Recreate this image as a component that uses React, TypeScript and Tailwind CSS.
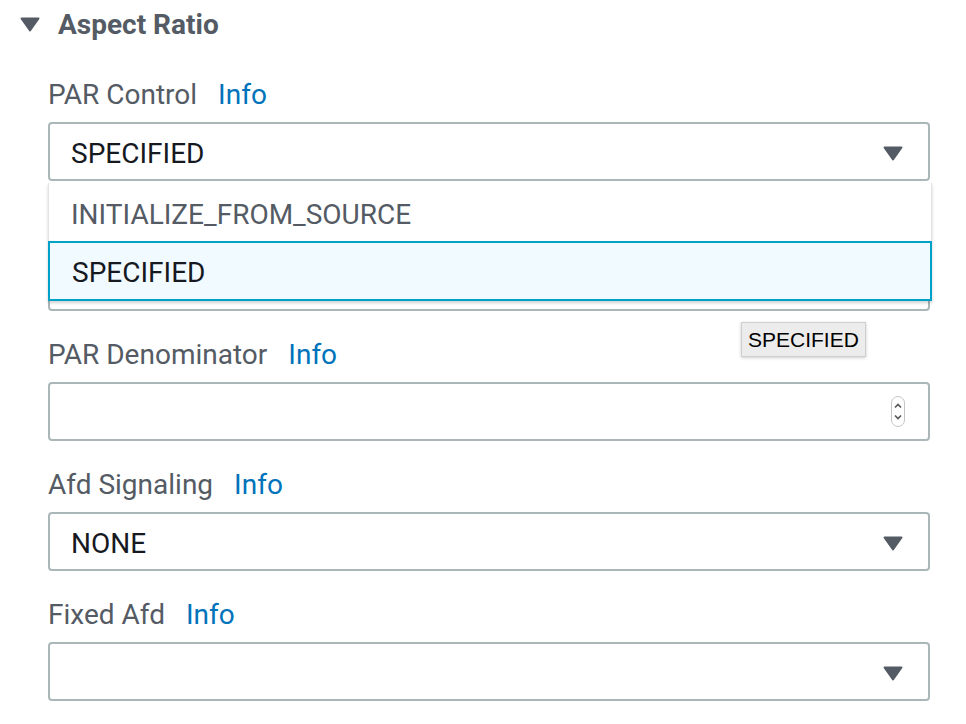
import React from "react";

const Caret: React.FC<{ className?: string }> = ({ className }) => (
    <svg width="20" height="15" viewBox="0 0 20 15" className={className}>
        <path d="M1.5 1.5h17L10 13.5z" fill="#545b64" stroke="#545b64" strokeWidth="2" strokeLinejoin="round" />
    </svg>
);

const Spinner: React.FC = () => (
    <svg width="14" height="31" viewBox="0 0 14 31">
        <rect x="0.5" y="0.5" width="13" height="30" rx="6.5" fill="#fff" stroke="#c4c4c4" />
        <path d="M4 11.5l3-3 3 3" fill="none" stroke="#555" strokeWidth="1.6" />
        <path d="M4 19.5l3 3 3-3" fill="none" stroke="#555" strokeWidth="1.6" />
    </svg>
);

const Field: React.FC<{ label: string; hidden?: boolean; children: React.ReactNode }> = ({ label, hidden, children }) => (
    <div className="flex flex-col mb-[24px]">
        <div className={`h-[36px] mb-[11px] pt-[4px] flex items-center gap-[21px] text-[28px] ${hidden ? "invisible" : ""}`}>
            <span className="text-[#545b64]">{label}</span>
            <span className="text-[#0073bb]">Info</span>
        </div>
        {children}
    </div>
);

const Select: React.FC<{ value?: string }> = ({ value }) => (
    <div className="h-[59px] border-2 border-[#aab7b8] rounded-[4px] flex items-center justify-between pt-[4px] pl-[21px] pr-[25px] bg-white">
        <span className="text-[28px] text-[#16191f]">{value}</span>
        <Caret />
    </div>
);

const options = ["INITIALIZE_FROM_SOURCE", "SPECIFIED"];

export default function App() {
    return (
        <div className="relative min-h-screen bg-white font-['Roboto',sans-serif] overflow-hidden">
            <div className="h-[46px] flex items-center pt-[4px] pl-[20px] gap-[18px]">
                <Caret className="mt-[-2px]" />
                <span className="text-[28px] font-bold text-[#545b64]">Aspect Ratio</span>
            </div>

            <div className="pl-[48px] w-[930px] pt-[29px]">
                <Field label="PAR Control">
                    <div className="relative">
                        <Select value="SPECIFIED" />
                        {/* open options list */}
                        <div className="absolute left-0 right-[-2px] top-[61px] z-10 bg-white border-x border-[#e1e4e5] shadow-[0_2px_3px_rgba(0,0,0,0.18)]">
                            {options.map((opt) =>
                                opt === "SPECIFIED" ? (
                                    <div
                                        key={opt}
                                        className="h-[60px] -mx-px border-2 border-[#00a1c9] bg-[#f1faff] flex items-center pt-[4px] pl-[22px] text-[28px] text-[#16191f]"
                                    >
                                        {opt}
                                    </div>
                                ) : (
                                    <div key={opt} className="h-[58px] flex items-center pt-[6px] pl-[22px] text-[28px] text-[#545b64]">
                                        {opt}
                                    </div>
                                )
                            )}
                        </div>
                    </div>
                </Field>

                <Field label="PAR Numerator" hidden>
                    <div className="h-[59px] border-2 border-[#aab7b8] rounded-[4px] bg-white" />
                </Field>

                <Field label="PAR Denominator">
                    <div className="h-[59px] border-2 border-[#aab7b8] rounded-[4px] bg-white flex items-center justify-end pr-[23px]">
                        <Spinner />
                    </div>
                </Field>

                <Field label="Afd Signaling">
                    <Select value="NONE" />
                </Field>

                <Field label="Fixed Afd">
                    <Select />
                </Field>
            </div>

            <div className="absolute left-[741px] top-[322px] z-20 h-[35px] px-[6px] flex items-center bg-[#ececec] border border-[#cfcfcf] shadow-[0_1px_3px_rgba(0,0,0,0.2)] font-['Liberation_Sans',sans-serif] text-[21px] text-black">
                SPECIFIED
            </div>
        </div>
    );
}
